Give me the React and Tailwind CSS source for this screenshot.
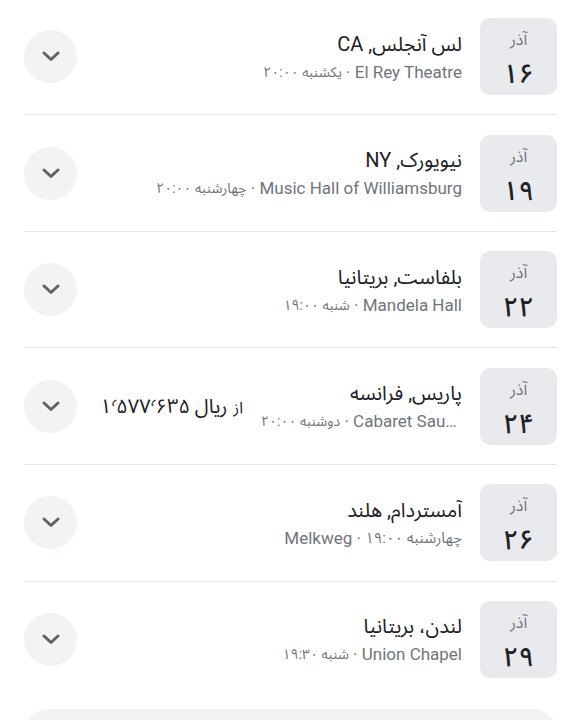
import React from "react";

const FONT = { fontFamily: "Roboto, 'Noto Sans Arabic', Vazirmatn, 'DejaVu Sans', sans-serif" };

const rows = [
  { title: "لس آنجلس, CA", venue: "El Rey Theatre", day: "یکشنبه ۲۰:۰۰", date: "۱۶" },
  { title: "نیویورک, NY", venue: "Music Hall of Williamsburg", day: "چهارشنبه ۲۰:۰۰", date: "۱۹" },
  { title: "بلفاست, بریتانیا", venue: "Mandela Hall", day: "شنبه ۱۹:۰۰", date: "۲۲" },
  { title: "پاریس, فرانسه", venue: "Cabaret Sauvage", day: "دوشنبه ۲۰:۰۰", date: "۲۴", price: true },
  { title: "آمستردام, هلند", venue: "Melkweg", day: "چهارشنبه ۱۹:۰۰", date: "۲۶", dayFirst: true },
  { title: "لندن، بریتانیا", venue: "Union Chapel", day: "شنبه ۱۹:۳۰", date: "۲۹", last: true },
];

function Chevron() {
  return (
    <div className="w-[53px] h-[53px] rounded-full bg-[#f1f3f4] flex items-center justify-center shrink-0">
      <svg width="18" height="11" viewBox="0 0 18 11" fill="none">
        <polyline points="2,2 9,8.5 16,2" stroke="#5f6368" strokeWidth="3" strokeLinecap="round" strokeLinejoin="round" />
      </svg>
    </div>
  );
}

function Row({ r }) {
  return (
    <div className={`flex items-center gap-[18px] py-[19.3px] ${r.last ? "" : "border-b border-[#e3e4e6]"}`}>
      <div className="w-[77px] h-[77px] rounded-[10px] bg-[#e8eaed] flex flex-col items-center pt-[10px] shrink-0">
        <div className="text-[16px] leading-[24px] text-[#70757a]">آذر</div>
        <div className="text-[27px] leading-[32px] mt-[6px] font-medium text-[#202124]">{r.date}</div>
      </div>
      <div className="flex-1 min-w-0 flex flex-col gap-[4px]">
        <div className="text-[20px] leading-[26px] text-[#202124] truncate">{r.title}</div>
        <div className="flex items-center text-[17px] leading-[22px] text-[#70757a] whitespace-nowrap min-w-0">
          {r.dayFirst ? (
            <>
              <span className="shrink-0 text-[15px]">{r.day}</span>
              <span className="shrink-0">&nbsp;·&nbsp;</span>
              <span className="truncate" dir="ltr">{r.venue}</span>
            </>
          ) : (
            <>
              <span className="truncate min-w-0" dir="ltr">{r.venue}</span>
              <span className="shrink-0">&nbsp;·&nbsp;</span>
              <span className="shrink-0 text-[14px]">{r.day}</span>
            </>
          )}
        </div>
      </div>
      {r.price && (
        <div className="shrink-0 flex items-baseline gap-[6px] text-[#202124] ml-[5px] whitespace-nowrap">
          <span className="text-[16px]">از</span>
          <span className="text-[20px]">ریال ۱٬۵۷۷٬۶۳۵</span>
        </div>
      )}
      <Chevron />
    </div>
  );
}

export default function App() {
  return (
    <div dir="rtl" className="w-[581px] h-[720px] overflow-hidden bg-white" style={FONT}>
      <div className="px-[24px] -mt-[1.3px]">
        {rows.map((r, i) => (
          <Row key={i} r={r} />
        ))}
      </div>
      <div className="mx-[24px] mt-[12px] h-[60px] rounded-[24px] bg-[#f1f3f4]" />
    </div>
  );
}
